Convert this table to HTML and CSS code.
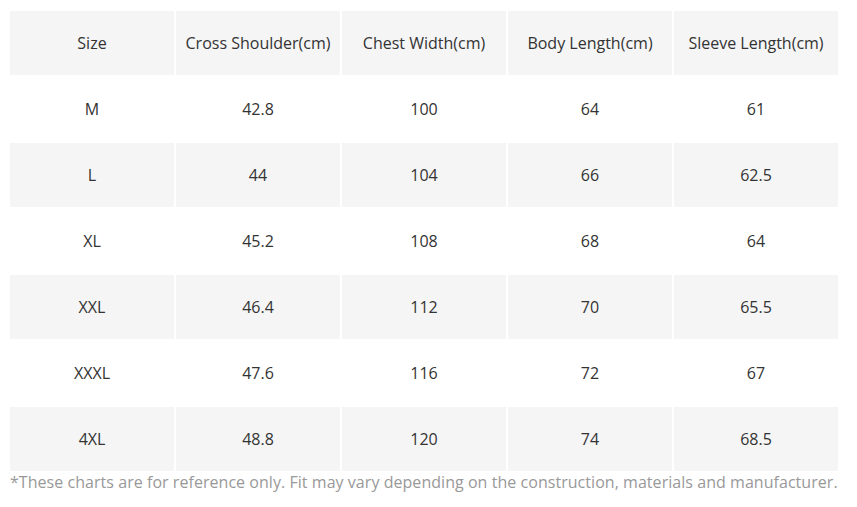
FILE: index.html
```html
<!DOCTYPE html>
<html>
<head>
<meta charset="utf-8">
<link rel="stylesheet" href="styles.css">
</head>
<body>
<div class="page">
  <div class="chart">
    <div class="cell">Size</div><div class="cell">Cross Shoulder(cm)</div><div class="cell">Chest Width(cm)</div><div class="cell">Body Length(cm)</div><div class="cell">Sleeve Length(cm)</div>
    <div class="cell w">M</div><div class="cell w">42.8</div><div class="cell w">100</div><div class="cell w">64</div><div class="cell w">61</div>
    <div class="cell">L</div><div class="cell">44</div><div class="cell">104</div><div class="cell">66</div><div class="cell">62.5</div>
    <div class="cell w">XL</div><div class="cell w">45.2</div><div class="cell w">108</div><div class="cell w">68</div><div class="cell w">64</div>
    <div class="cell">XXL</div><div class="cell">46.4</div><div class="cell">112</div><div class="cell">70</div><div class="cell">65.5</div>
    <div class="cell w">XXXL</div><div class="cell w">47.6</div><div class="cell w">116</div><div class="cell w">72</div><div class="cell w">67</div>
    <div class="cell">4XL</div><div class="cell">48.8</div><div class="cell">120</div><div class="cell">74</div><div class="cell">68.5</div>
  </div>
  <p class="note">*These charts are for reference only. Fit may vary depending on the construction, materials and manufacturer.</p>
</div>
</body>
</html>
```
FILE: styles.css
```css
html, body {
  margin: 0;
  padding: 0;
  background: #fff;
}
body {
  font-family: "Open Sans", "Liberation Sans", sans-serif;
  color: #333;
}
.page {
  padding: 11px 0 0 10px;
  width: 828px;
}
.chart {
  display: grid;
  grid-template-columns: repeat(5, 164px);
  grid-auto-rows: 64px;
  gap: 2px;
}
.cell {
  background: #f5f5f5;
  display: flex;
  align-items: center;
  justify-content: center;
  font-size: 16px;
  color: #333;
}
.cell.w {
  background: #fff;
}
.note {
  margin: 0;
  font-size: 16px;
  line-height: 22px;
  letter-spacing: 0.045px;
  color: #999;
  white-space: nowrap;
}
```
